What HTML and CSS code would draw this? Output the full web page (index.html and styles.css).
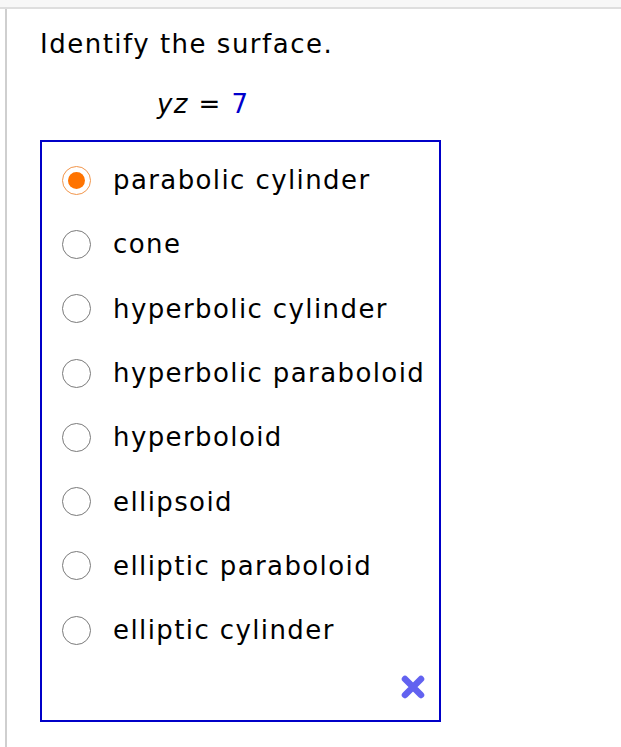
FILE: index.html
```html
<!DOCTYPE html>
<html>
<head>
<meta charset="utf-8">
<link rel="stylesheet" href="styles.css">
</head>
<body>
<div class="topbar"></div>
<div class="page">
  <div class="question">
    <p class="prompt">Identify the surface.</p>
    <p class="equation"><span class="var">yz</span> <span class="eq">=</span> <span class="num">7</span></p>
    <div class="choices">
      <label class="choice"><span class="radio checked"><span class="dot"></span></span><span class="label">parabolic cylinder</span></label>
      <label class="choice"><span class="radio"></span><span class="label">cone</span></label>
      <label class="choice"><span class="radio"></span><span class="label">hyperbolic cylinder</span></label>
      <label class="choice"><span class="radio"></span><span class="label">hyperbolic paraboloid</span></label>
      <label class="choice"><span class="radio"></span><span class="label">hyperboloid</span></label>
      <label class="choice"><span class="radio"></span><span class="label">ellipsoid</span></label>
      <label class="choice"><span class="radio"></span><span class="label">elliptic paraboloid</span></label>
      <label class="choice"><span class="radio"></span><span class="label">elliptic cylinder</span></label>
      <div class="footer">
        <svg class="xmark" width="32" height="32" viewBox="0 0 32 32">
          <path d="M8 8 L24 24 M24 8 L8 24" stroke="#5a5af0" stroke-width="6.5" stroke-linecap="round" fill="none"/>
        </svg>
      </div>
    </div>
  </div>
</div>
</body>
</html>
```
FILE: styles.css
```css
html, body {
  margin: 0;
  padding: 0;
  background: #fff;
}
body {
  font-family: "DejaVu Sans", Verdana, sans-serif;
  color: #000;
  width: 621px;
  height: 747px;
  overflow: hidden;
}
.topbar {
  height: 7px;
  background: #f7f7f7;
  border-bottom: 2px solid #dedede;
}
.page {
  margin-left: 5px;
  border-left: 2px solid #cfcfcf;
  height: 738px;
}
.question {
  padding-left: 33px;
  padding-top: 20px;
}
.prompt {
  margin: 0;
  font-size: 26px;
  line-height: 31px;
  letter-spacing: 1.5px;
}
.equation {
  margin: 29px 0 0 0;
  padding-left: 117px;
  font-size: 26px;
  line-height: 31px;
  letter-spacing: 1.4px;
}
.var {
  font-style: italic;
}
.num {
  color: #0000cc;
}
.choices {
  margin-top: 20px;
  width: 401px;
  height: 582px;
  box-sizing: border-box;
  border: 2px solid #0000c8;
  padding-top: 6px;
  display: flex;
  flex-direction: column;
}
.choice {
  display: flex;
  align-items: center;
  height: 64.3px;
  font-size: 26px;
  letter-spacing: 1.4px;
}
.radio {
  width: 29px;
  height: 29px;
  box-sizing: border-box;
  border: 1.5px solid #7a7a7a;
  border-radius: 50%;
  margin-left: 20px;
  margin-right: 22px;
  display: flex;
  align-items: center;
  justify-content: center;
  flex: none;
}
.radio.checked {
  border-color: #f2954a;
}
.dot {
  width: 17px;
  height: 17px;
  border-radius: 50%;
  background: #ff7300;
}
.footer {
  display: flex;
  justify-content: flex-end;
  padding-right: 10px;
  padding-top: 9px;
}
.xmark {
  display: block;
  opacity: 0.95;
}
```
